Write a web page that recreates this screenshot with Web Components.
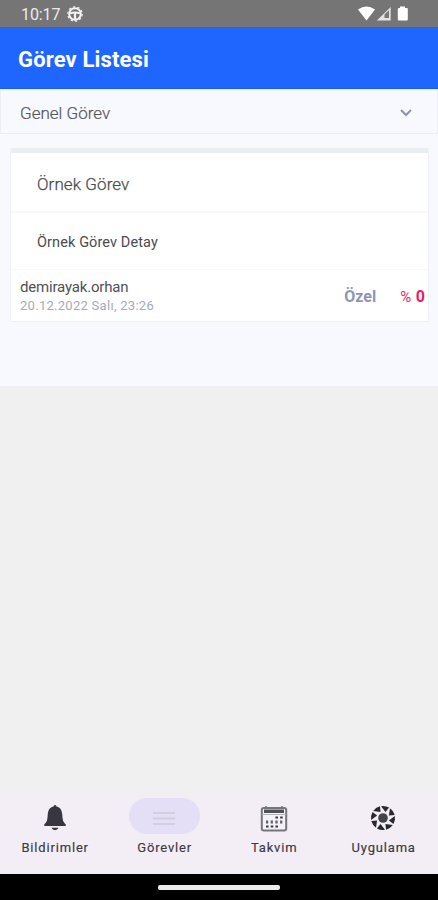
<!DOCTYPE html>
<html lang="tr">
<head>
<meta charset="utf-8">
<title>Görev Listesi</title>
<style>
html,body{margin:0;height:100%;overflow:hidden}
body{font-family:Roboto,"Liberation Sans",sans-serif;background:#f0f0f0}
</style>
</head>
<body>
<task-app></task-app>
<script>
const define = (name, html) => {
  const t = document.createElement('template');
  t.innerHTML = html;
  customElements.define(name, class extends HTMLElement {
    constructor() {
      super();
      this.attachShadow({ mode: 'open' }).append(t.content.cloneNode(true));
    }
  });
};

define('status-bar', `<style>
:host{display:flex;align-items:center;height:27px;background:#757575;color:#ececec;box-sizing:border-box;padding:1px 30px 0 21px;font-size:16px;line-height:27px;letter-spacing:-.1px}
svg{display:block}.car{margin-left:7px}.signals{margin-left:auto}
</style><span>10:17</span>
<svg class="car" width="16" height="16" viewBox="0 0 16 16" fill="none" stroke="#f5f5f5"><circle cx="8" cy="8" r="5.8" stroke-width="2"/><circle cx="8" cy="8" r="7.2" stroke-width="1.200" stroke-dasharray="2.300 2.220"/><path d="M3 7.300Q8 5.800 13 7.300" stroke-width="1.900"/><path d="M8 7v6" stroke-width="2.200"/></svg>
<svg class="signals" width="50" height="16" viewBox="0 0 50 16"><path d="M0 3.600Q8.500-2.400 17 3.600L8.500 14.500Z" fill="#fff"/><path d="M18.800 14.500L32.700.9V14.500Z" fill="#e3e3e3"/><path d="M26.500 12V8.600L31 4.300V12Z" fill="#777"/><path d="M40 2h2V.4h5V2h2q.8 0 .8.9v10.700q0 .9-.9.9h-8.200q-.9 0-.9-.9V2.900q0-.9 1.200-.9Z" fill="#fff"/></svg>`);

define('app-header', `<style>
:host{display:flex;align-items:center;height:62px;box-sizing:border-box;padding:4px 18px 0;background:#1f66ff;border-bottom:1px solid #165df5;color:#fff;font-weight:700;font-size:22px;letter-spacing:.15px}
</style><slot></slot>`);

define('filter-select', `<style>
:host{display:flex;align-items:center;justify-content:space-between;height:45px;box-sizing:border-box;padding:1px 25px 0 19px;background:#f8f9fe;border:1px solid #eceef3;border-top:2px solid #f0f3fc;color:#55565b;font-size:17px;font-weight:300;-webkit-text-stroke:.2px #55565b}
svg{display:block}
</style><slot></slot><svg width="12" height="8" viewBox="0 0 12 8" fill="none" stroke="#8d93a8" stroke-width="2"><path d="M1 1l5 5 5-5"/></svg>`);

define('task-card', `<style>
:host{display:block;box-sizing:border-box;height:174px;margin:14px 9px 0 10px;background:#fff;border:1px solid #edf0f4;border-top:5px solid #eaedf2;border-radius:2px;color:#4a4b50}
.title{display:flex;align-items:center;height:60px;box-sizing:border-box;padding:3px 26px 0;border-bottom:2px solid #f7f8f9;font-size:17px;font-weight:300;letter-spacing:.08px;-webkit-text-stroke:.25px}
.detail{display:flex;align-items:center;height:57px;box-sizing:border-box;padding:2px 26px 0;border-bottom:1px solid #f8f8fa;font-size:14.500px;letter-spacing:.1px}
.foot{display:flex;align-items:center;padding:8px 3px 0 9px}
.name{font-size:15px;line-height:19px;color:#505155;letter-spacing:-.18px}
.date{font-size:13px;line-height:18px;color:#a7aab8;letter-spacing:.28px}
.kind{margin-left:auto;font-size:16px;font-weight:700;color:#8f95b2}
.pct{margin-left:24px;font-size:16px;font-weight:700;color:#ea1e63}
.pct i{font-style:normal;font-weight:400;font-size:15px;letter-spacing:.6px}
</style><div class="title"><slot name="title"></slot></div><div class="detail"><slot name="detail"></slot></div>
<div class="foot"><div><div class="name"><slot name="owner"></slot></div><div class="date"><slot name="date"></slot></div></div><span class="kind"><slot name="kind"></slot></span><span class="pct"><i>%</i> <slot name="percent"></slot></span></div>`);

define('nav-item', `<style>
:host{display:flex;flex:1 1 0;flex-direction:column;align-items:center;padding-top:9px;color:#3c3a42;font-size:13px;line-height:16px;letter-spacing:.82px;font-weight:400;-webkit-text-stroke:.15px}
.pill{display:flex;align-items:center;justify-content:center;width:71px;height:36px;border-radius:18px;margin-bottom:6px}
:host([active]) .pill{background:#e5def7}
span{margin-right:-.8px}
</style><div class="pill"><slot name="icon"></slot></div><span><slot></slot></span>`);

define('bell-icon', `<style>:host,svg{display:block}:host{padding-top:4px}</style><svg width="24" height="26" viewBox="0 0 24 26" fill="#38363e"><path d="M10.5 1.500q0-1.500 1.500-1.500T13.500 1.500C18 2.500 19 6 19.300 10c.3 5 .8 7 3.400 9.300V21H1.300v-1.700C4 17 4.400 15 4.700 10 5 6 6 2.500 10.500 1.500Z"/><path d="M8.500 22.800h7q-1 2.400-3.500 2.400T8.500 22.800Z"/></svg>`);
define('lines-icon', `<style>:host,svg{display:block}:host{padding-top:4px}</style><svg width="22" height="15" viewBox="0 0 22 15" stroke="#d4cee0" stroke-width="2"><path d="M0 2h22M0 7.500h22M0 13h22"/></svg>`);
define('calendar-icon', `<style>:host,svg{display:block}:host{padding-top:5px}</style><svg width="28" height="26" viewBox="0 0 28 26"><rect x="1.800" y="2" width="24.400" height="22.500" rx="2" fill="#f5f2f7" stroke="#77757c" stroke-width="2"/><path d="M4 3.500h20v3.500H4Z" fill="#504e56"/><path d="M1.800 8.500h24.400" stroke="#b5b2ba"/><path d="M6 0v3M22 0v3" stroke="#77757c" stroke-width="1.500"/><path d="M15.400 11.500h8M6 20.500h13" stroke="#3c3a42" stroke-width="2.200" stroke-dasharray="2.600 2.100"/><path d="M6 16h17" stroke="#5f5d65" stroke-width="2.800" stroke-dasharray="2.200 2.500"/></svg>`);

customElements.define('aperture-icon', class extends HTMLElement {
  constructor() {
    super();
    let blades = '';
    for (let a = 0; a < 360; a += 45)
      blades += `<path transform="rotate(${a + 12} 13 13)" d="M8.600 1.800Q12.500.2 16.800 1.500L14.200 6.700Z"/>`;
    this.attachShadow({ mode: 'open' }).innerHTML = `<style>:host,svg{display:block}:host{padding-top:4px}</style><svg width="26" height="26" viewBox="0 0 26 26" fill="#29272f">${blades}<circle cx="13" cy="13" r="4.800" fill="#44424a"/></svg>`;
  }
});

define('bottom-nav', `<style>
:host{display:flex;height:85px;background:linear-gradient(#f0f0f2,#f3edf6 8px)}
</style><slot></slot>`);

define('gesture-bar', `<style>
:host{display:flex;justify-content:center;height:26px;box-sizing:border-box;padding-top:11px;background:#000}
i{width:122px;height:4.500px;border-radius:2px;background:#ededed}
</style><i></i>`);

define('task-app', `<style>
:host{display:flex;flex-direction:column;height:900px;width:438px;background:#f0f0f0}
main{height:297px;background:#f8f9fe}
.space{flex:1}
</style>
<status-bar></status-bar>
<app-header>Görev Listesi</app-header>
<main>
<filter-select>Genel Görev</filter-select>
<task-card><span slot="title">Örnek Görev</span><span slot="detail">Örnek Görev Detay</span><span slot="owner">demirayak.orhan</span><span slot="date">20.12.2022 Salı, 23:26</span><span slot="kind">Özel</span><span slot="percent">0</span></task-card>
</main>
<div class="space"></div>
<bottom-nav>
<nav-item><bell-icon slot="icon"></bell-icon>Bildirimler</nav-item>
<nav-item active><lines-icon slot="icon"></lines-icon>Görevler</nav-item>
<nav-item><calendar-icon slot="icon"></calendar-icon>Takvim</nav-item>
<nav-item><aperture-icon slot="icon"></aperture-icon>Uygulama</nav-item>
</bottom-nav>
<gesture-bar></gesture-bar>`);
</script>
</body>
</html>
